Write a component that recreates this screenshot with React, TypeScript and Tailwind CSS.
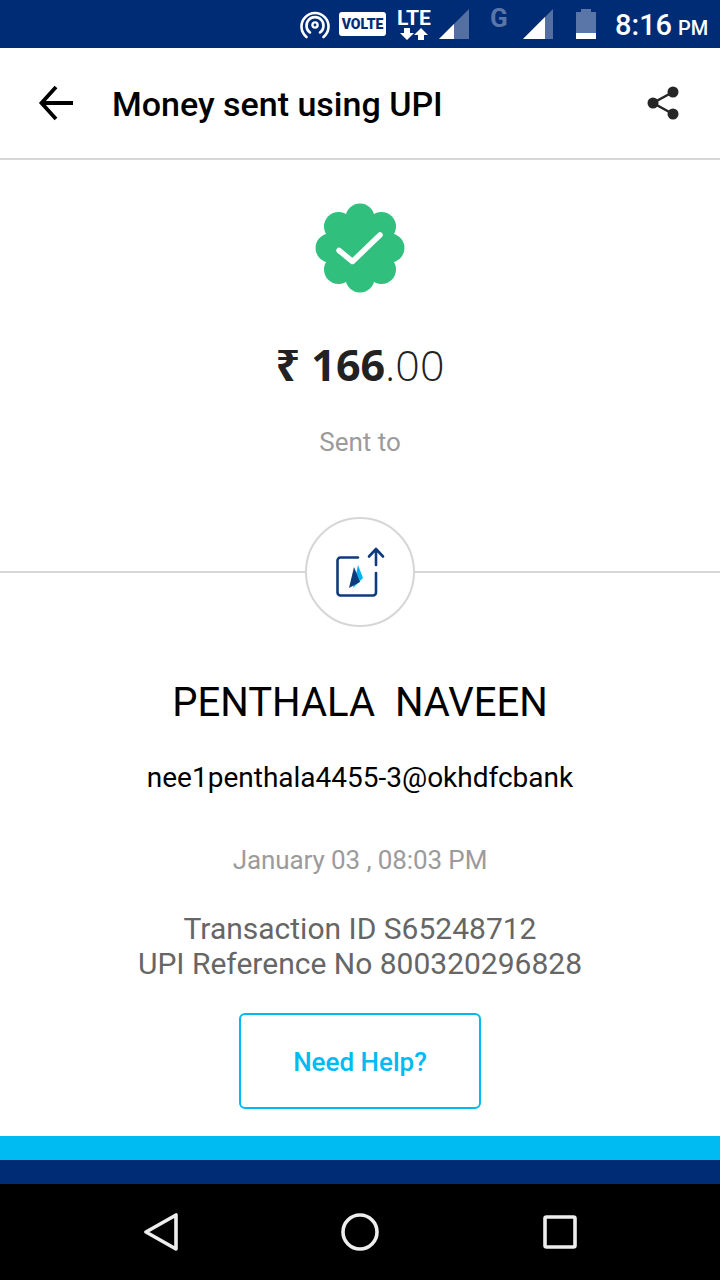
import React from 'react';

const roboto = { fontFamily: 'Roboto, sans-serif' };

const SignalIcon = ({ fill }: { fill: string }) => (
  <svg width="30" height="30" viewBox="0 0 30 30">
    <path d="M0 30 L30 0 V30 Z" fill="#fff" fillOpacity="0.33" />
    <path d={fill} fill="#fff" />
  </svg>
);

const StatusBar = () => (
  <div className="h-12 bg-[#002b75] relative flex items-center text-white font-['Roboto',sans-serif]">
    <svg className="absolute left-[300px] top-[10px]" width="30" height="30" viewBox="0 0 30 30" fill="none" stroke="#fff" strokeWidth="2.6" strokeLinecap="round">
      <circle cx="15" cy="15" r="2.6" strokeWidth="2.4" />
      <path d="M10 22.5 A8.5 8.5 0 1 1 20 22.5" />
      <path d="M6.5 27 A13.5 13.5 0 1 1 23.5 27" />
    </svg>
    <div className="absolute left-[339px] top-[12px] w-[47px] h-[24px] bg-white rounded-[3px] flex items-center justify-center text-[#002b75] text-[14px] font-black leading-none">VOLTE</div>
    <div className="absolute left-[396px] top-[8px] w-[36px] flex flex-col items-center">
      <span className="text-[21px] leading-[20px] font-bold">LTE</span>
      <svg width="28" height="13" viewBox="0 0 28 13" fill="#fff">
        <path d="M4 0 H10 V5 H14 L7 12 L0 5 H4 Z" />
        <path d="M18 12 H24 V7 H28 L21 0 L14 7 H18 Z" />
      </svg>
    </div>
    <div className="absolute left-[439px] top-[9px]">
      <SignalIcon fill="M0 30 L15 15 V30 Z" />
    </div>
    <span className="absolute left-[490px] top-[4px] text-[26px] leading-[28px] font-bold text-[#5a76a8]">G</span>
    <div className="absolute left-[523px] top-[9px]">
      <SignalIcon fill="M0 30 L22 8 V30 Z" />
    </div>
    <div className="absolute left-[576px] top-[9px] w-[20px] h-[30px]">
      <div className="mx-auto w-[10px] h-[3px] bg-[#5a76a8]" />
      <div className="h-[21px] bg-[#5a76a8]" />
      <div className="h-[6px] bg-white" />
    </div>
    <div className="absolute left-[615px] top-[6px] flex items-baseline">
      <span className="text-[29px] leading-[38px] font-medium">8:16</span>
      <span className="text-[20px] leading-[38px] font-medium ml-[6px]">PM</span>
    </div>
  </div>
);

const Header = () => (
  <div className="h-[112px] border-b-2 border-[#d6d6d6] flex items-center pl-[38px] pr-[40px] bg-white">
    <svg width="36" height="36" viewBox="0 0 36 36" fill="none" stroke="#000" strokeWidth="3.8">
      <path d="M35 18 H5 M18 2 L3.5 18 L18 34" />
    </svg>
    <span className="ml-[38px] mt-[3px] text-[34px] font-medium text-black" style={roboto}>Money sent using UPI</span>
    <svg className="ml-auto" width="34" height="36" viewBox="0 0 34 36" fill="#262626" stroke="#262626">
      <path d="M27 7 L7 18 L27 29" fill="none" strokeWidth="2.5" />
      <circle cx="27" cy="7" r="5.5" stroke="none" />
      <circle cx="7" cy="18" r="5.5" stroke="none" />
      <circle cx="27" cy="29" r="5.5" stroke="none" />
    </svg>
  </div>
);

const Badge = () => (
  <svg width="90" height="90" viewBox="0 0 90 90">
    <g fill="#30bf7d">
      <circle cx="45" cy="45" r="33" />
      <circle cx="45" cy="15" r="14.5" />
      <circle cx="45" cy="75" r="14.5" />
      <circle cx="15" cy="45" r="14.5" />
      <circle cx="75" cy="45" r="14.5" />
      <circle cx="23.5" cy="23.5" r="14.5" />
      <circle cx="66.5" cy="23.5" r="14.5" />
      <circle cx="23.5" cy="66.5" r="14.5" />
      <circle cx="66.5" cy="66.5" r="14.5" />
    </g>
    <path d="M24 47.5 L37.5 58.5 L65 32" fill="none" stroke="#fff" strokeWidth="5.5" strokeLinecap="round" strokeLinejoin="round" />
  </svg>
);

const PayeeIcon = () => (
  <svg width="54" height="54" viewBox="0 0 54 54" fill="none">
    <path d="M25 12.5 H7.5 a3 3 0 0 0 -3 3 V47.5 a3 3 0 0 0 3 3 H40 a3 3 0 0 0 3 -3 V28" stroke="#0f3b7d" strokeWidth="2.6" strokeLinecap="round" />
    <path d="M43 20 V4 M36 11.5 L43 4 L50 11.5" stroke="#0f3b7d" strokeWidth="2.6" strokeLinecap="round" strokeLinejoin="round" />
    <path d="M25 20 L30 33 L20 43 Z" fill="#00b4ee" />
    <path d="M21 22 L27 37 L16 43 Z" fill="#0f3b7d" />
  </svg>
);

const NavBar = () => (
  <div className="h-24 bg-black flex items-center justify-center">
    <svg className="-ml-[1px]" width="36" height="38" viewBox="0 0 36 38" fill="none" stroke="#eeeeee" strokeWidth="3.6" strokeLinejoin="round">
      <path d="M33 2 V36 L3 19 Z" />
    </svg>
    <svg className="ml-[162px]" width="38" height="38" viewBox="0 0 38 38" fill="none" stroke="#eeeeee" strokeWidth="3.6">
      <circle cx="19" cy="19" r="17" />
    </svg>
    <svg className="ml-[164px]" width="34" height="34" viewBox="0 0 34 34" fill="none" stroke="#eeeeee" strokeWidth="3.6" strokeLinejoin="round">
      <rect x="2" y="2" width="30" height="30" rx="1.5" />
    </svg>
  </div>
);

export default function App() {
  return (
    <div className="w-[720px] h-[1280px] bg-white flex flex-col overflow-hidden" style={roboto}>
      <StatusBar />
      <Header />
      <div className="flex-1 flex flex-col items-center">
        <div className="mt-[43px] h-[90px]">
          <Badge />
        </div>
        <div className="mt-[42px] h-[60px] flex items-center text-[43px] text-[#222222] font-['Open_Sans',sans-serif]">
          <span className="font-bold font-['Noto_Sans',sans-serif]">₹</span>
          <span className="font-bold whitespace-pre"> 166</span>
          <span className="font-light">.00</span>
        </div>
        <div className="mt-[32px] h-[30px] text-[26px] leading-[30px] text-[#9b9b9b]">Sent to</div>
        <div className="mt-[60px] w-full h-[110px] relative flex justify-center">
          <div className="absolute left-0 right-0 top-[54px] h-[2px] bg-[#d6d6d6]" />
          <div className="relative w-[110px] h-[110px] rounded-full border-2 border-[#d6d6d6] bg-white flex items-center justify-center">
            <PayeeIcon />
          </div>
        </div>
        <div className="mt-[53px] h-[46px] text-[40px] leading-[46px] text-black whitespace-pre">PENTHALA  NAVEEN</div>
        <div className="mt-[34px] h-[36px] text-[28px] leading-[36px] text-black">nee1penthala4455-3@okhdfcbank</div>
        <div className="mt-[48px] h-[32px] text-[26px] leading-[32px] tracking-[-0.1px] text-[#9b9b9b]">January 03 , 08:03 PM</div>
        <div className="mt-[35px] text-[30px] leading-[35px] text-[#666666] text-center">
          <div>Transaction ID S65248712</div>
          <div>UPI Reference No 800320296828</div>
        </div>
        <button className="mt-[32px] w-[242px] h-[96px] pt-[2px] rounded-[6px] border-2 border-[#00baf2] text-[#00baf2] text-[26px] font-medium">Need Help?</button>
      </div>
      <div className="h-6 bg-[#00baf2]" />
      <div className="h-6 bg-[#002b75]" />
      <NavBar />
    </div>
  );
}
